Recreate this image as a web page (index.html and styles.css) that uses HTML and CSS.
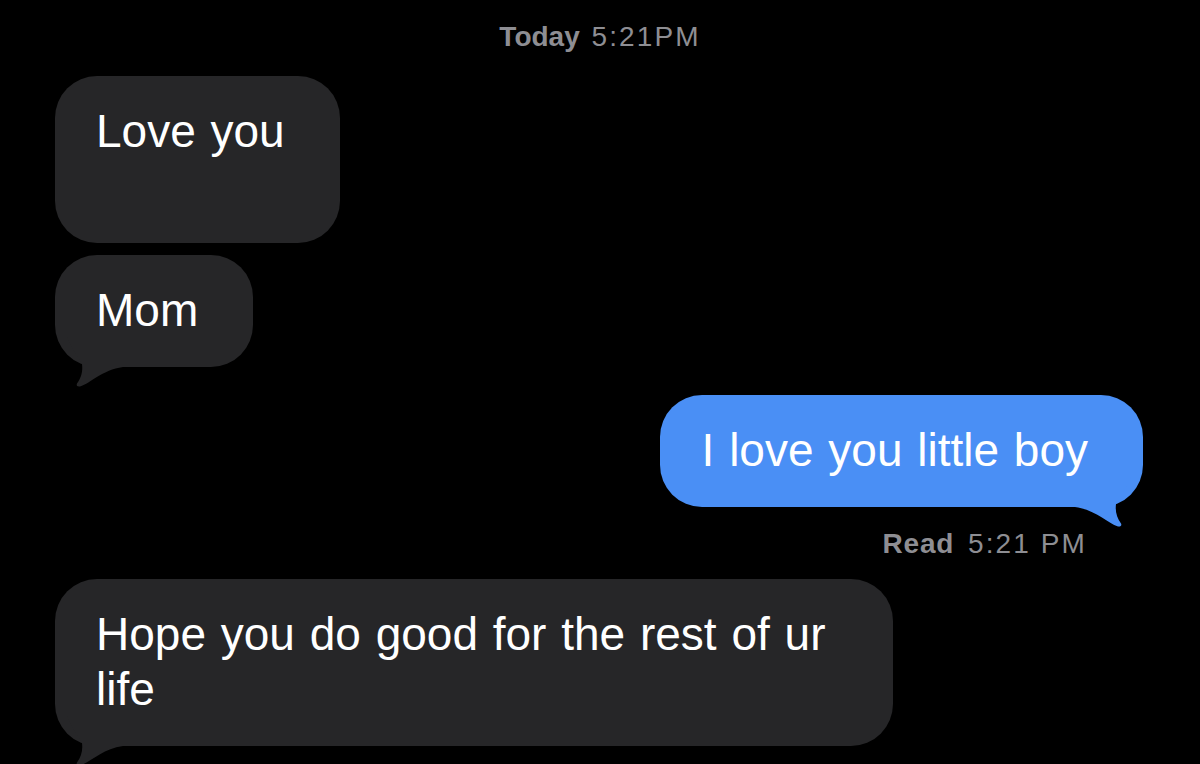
FILE: index.html
```html
<!DOCTYPE html>
<html lang="en">
<head>
<meta charset="utf-8">
<title>Messages</title>
<link rel="stylesheet" href="styles.css">
</head>
<body>
<main class="thread">
  <div class="stamp"><b>Today</b> <span class="time">5:21PM</span></div>

  <div class="bubble in two-line">Love you</div>

  <div class="bubble in gap-s">Mom<svg class="tail" viewBox="0 -30 70 52" aria-hidden="true"><path d="M12 -30 C18 -16 25 -8 27 -3 C28 5 26 11 22 16.5 C21 18.5 22.5 20 25 19.5 C36 16 47 3 68 0 L68 -30 Z"/></svg></div>

  <div class="bubble out gap-m">I love you little boy<svg class="tail" viewBox="0 -30 70 52" aria-hidden="true"><path d="M12 -30 C18 -16 25 -8 27 -3 C28 5 26 11 22 16.5 C21 18.5 22.5 20 25 19.5 C36 16 47 3 68 0 L68 -30 Z"/></svg></div>

  <div class="receipt"><b>Read</b> <span class="time">5:21 PM</span></div>

  <div class="bubble in gap-r">Hope you do good for the rest of ur life<svg class="tail" viewBox="0 -30 70 52" aria-hidden="true"><path d="M12 -30 C18 -16 25 -8 27 -3 C28 5 26 11 22 16.5 C21 18.5 22.5 20 25 19.5 C36 16 47 3 68 0 L68 -30 Z"/></svg></div>
</main>
</body>
</html>
```

FILE: styles.css
```css
html, body {
  margin: 0;
  background: #000;
}

body {
  width: 1200px;
  height: 764px;
  overflow: hidden;
  font-family: "Liberation Sans", Arial, sans-serif;
  -webkit-font-smoothing: antialiased;
}

.thread {
  display: flex;
  flex-direction: column;
  padding-top: 20px;
}

.stamp,
.receipt {
  font-size: 28px;
  line-height: 34px;
  color: #8e8e93;
  white-space: nowrap;
}

.stamp b,
.receipt b {
  font-weight: 700;
  margin-right: 4px;
}

.stamp .time,
.receipt .time {
  letter-spacing: 2.1px;
}

.stamp {
  align-self: center;
}

.receipt {
  align-self: flex-end;
  margin-top: 20px;
  margin-right: 113px;
}

.receipt b {
  letter-spacing: 0.8px;
  margin-right: 6px;
}

.bubble {
  position: relative;
  font-size: 46px;
  line-height: 55px;
  word-spacing: 2px;
  color: #fff;
  padding: 28px 55px 29px 41px;
  border-radius: 42px;
  max-width: 742px;
  margin-top: 22px;
}

.bubble.in {
  align-self: flex-start;
  margin-left: 55px;
  background: #262628;
  fill: #262628;
}

.bubble.out {
  align-self: flex-end;
  margin-right: 57px;
  padding-left: 42px;
  background: #4a8ff5;
  fill: #4a8ff5;
}

.two-line {
  min-height: 110px;
}

.gap-s { margin-top: 12px; }
.gap-m { margin-top: 28px; }
.gap-r { margin-top: 18px; }

.tail {
  position: absolute;
  bottom: -22px;
  width: 70px;
  height: 52px;
  pointer-events: none;
}

.in .tail {
  left: 0;
}

.out .tail {
  right: 0;
  transform: scaleX(-1);
}
```
